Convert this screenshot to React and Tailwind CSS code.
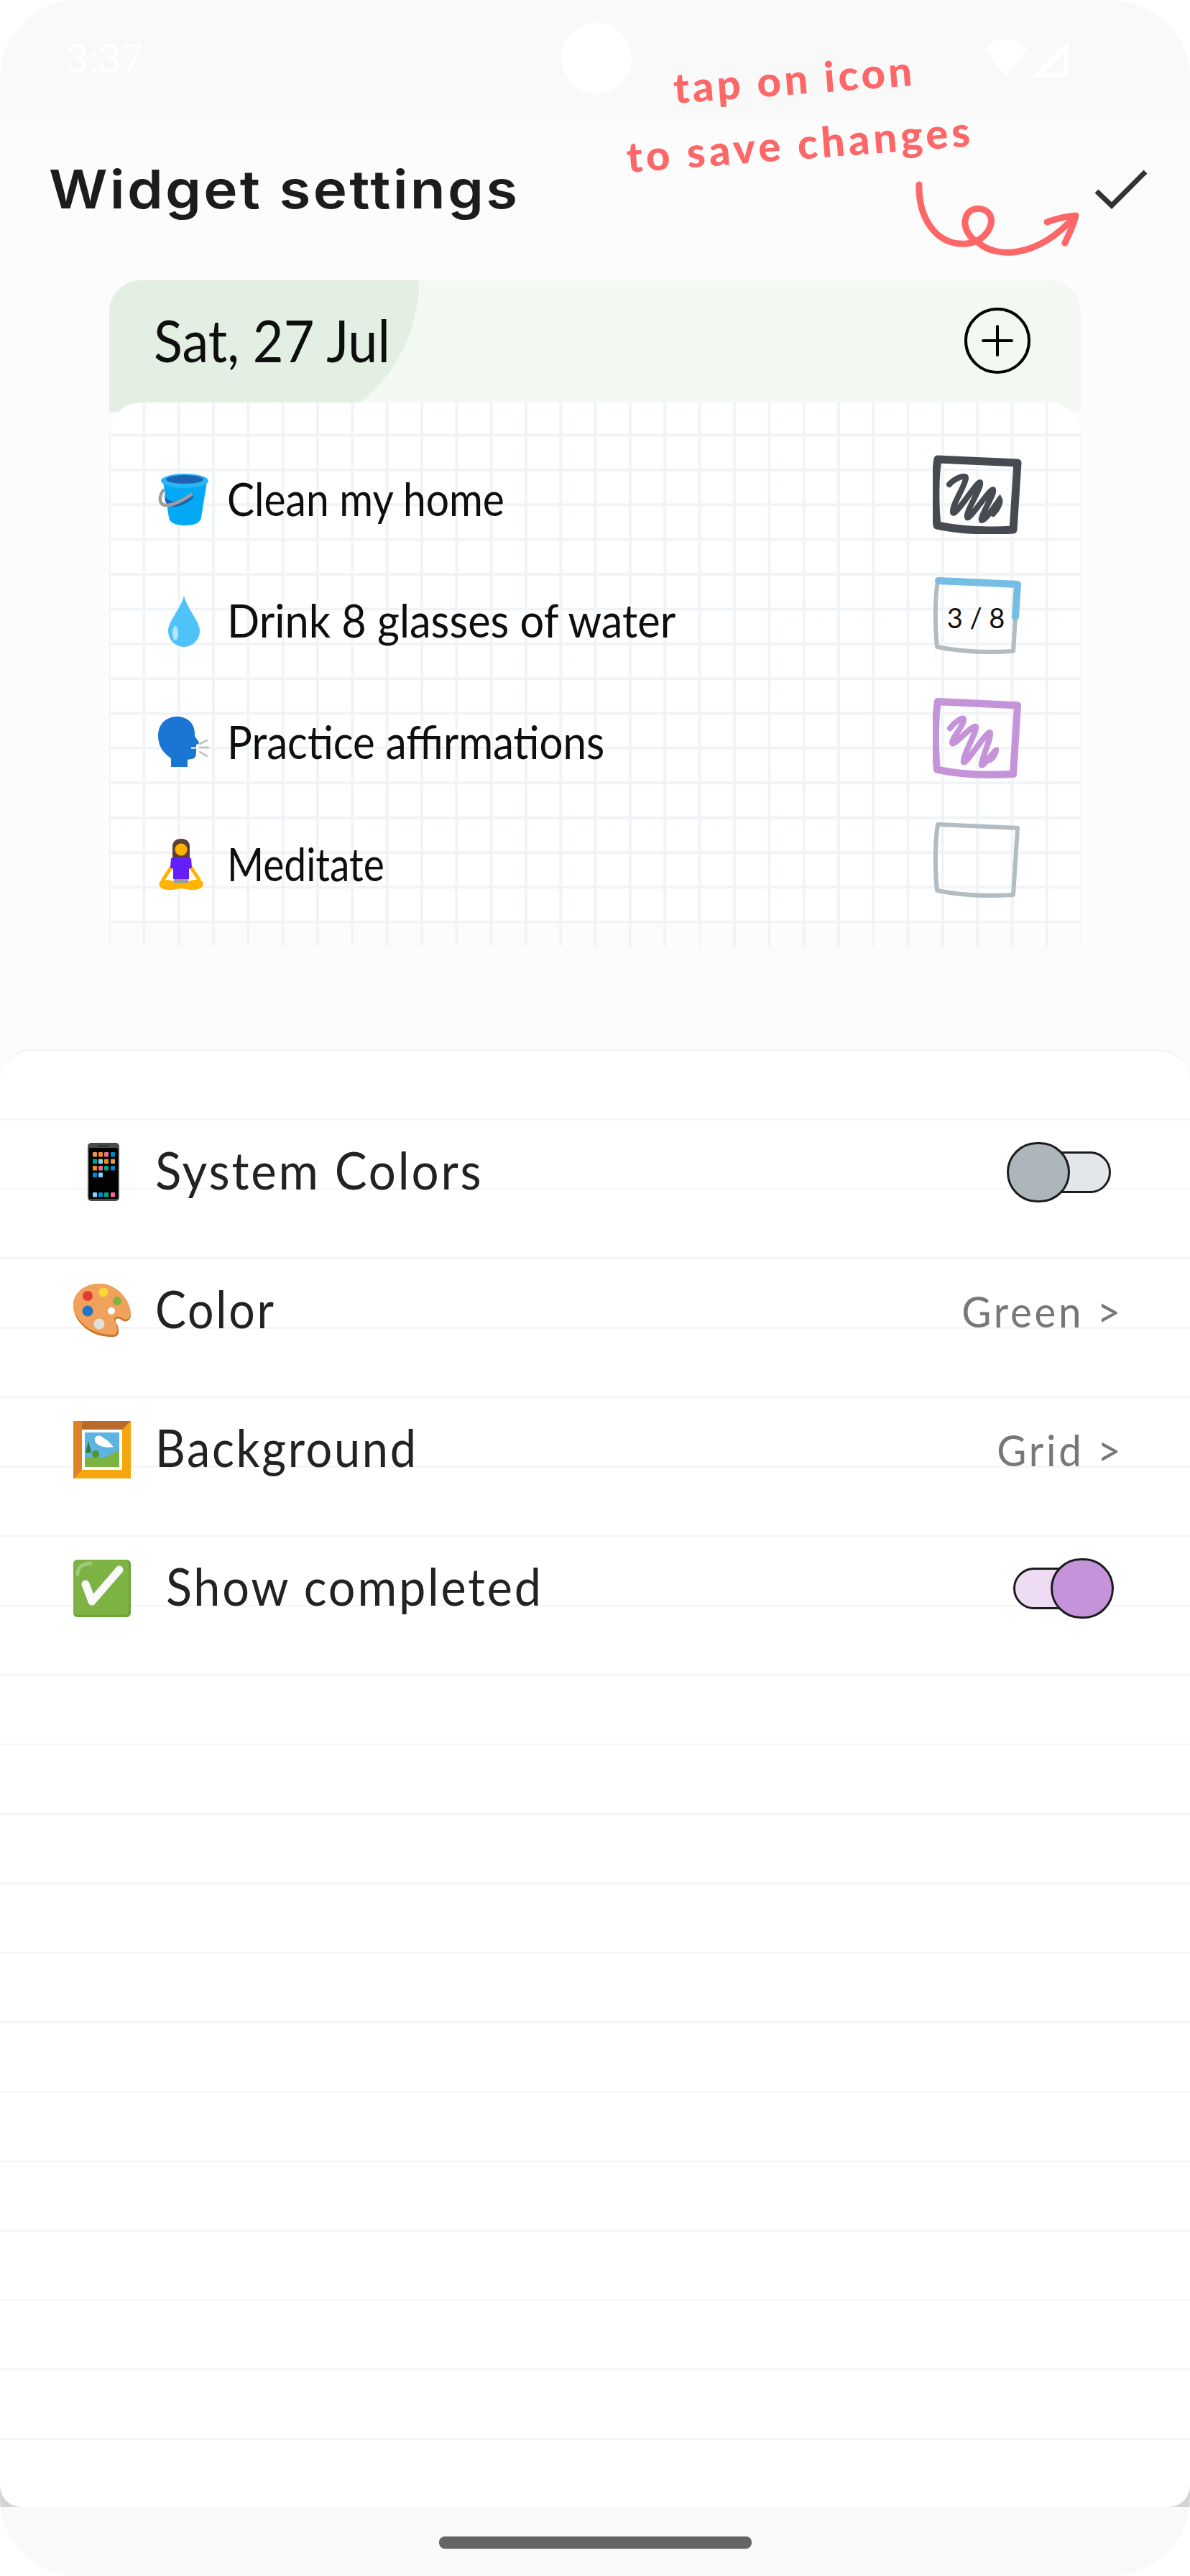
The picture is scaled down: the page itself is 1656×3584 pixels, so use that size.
function BucketEmoji() {
  return (
    <svg viewBox="0 0 72 74" className="w-[72px] h-[74px] shrink-0">
      <path d="M7 12 L15 62 Q17 73 38 73 Q58 73 60 62 L68 12Z" fill="#03a9f4" />
      <path d="M8 26 C10 44 30 44 50 30 L48 36 C30 50 16 50 10 40Z" fill="#1e64b4" />
      <path d="M7 24 C-1 38 3 46 14 45 C24 44 36 37 46 30" stroke="#9e9e9e" strokeWidth="4.5" fill="none" strokeLinecap="round" />
      <ellipse cx="37" cy="11" rx="33" ry="10" fill="#29b6f6" />
      <ellipse cx="37" cy="9" rx="26" ry="6" fill="#1e64b4" />
    </svg>
  )
}

function DropEmoji() {
  return (
    <svg viewBox="0 0 72 72" className="w-[72px] h-[72px] shrink-0">
      <path d="M36 1 C31 20 14 36 14 50 A22 22 0 0 0 58 50 C58 36 41 20 36 1Z" fill="#4fc3f7" />
      <ellipse cx="24" cy="53" rx="4" ry="10" fill="#b3e5fc" />
    </svg>
  )
}

function HeadEmoji() {
  return (
    <svg viewBox="0 0 72 72" className="w-[72px] h-[72px] shrink-0">
      <path d="M26 0 C42 0 50 10 51 22 L51 27 L57 36 Q57 38 53 39 L53 50 Q53 59 46 59 L41 60 L41 70 L18 70 L18 58 C6 50 0 40 0 26 C0 10 12 0 26 0Z" fill="#1976d2" />
      <path d="M58 38 L68 33 M58 43 L70 43 M58 49 L68 55" stroke="#b0bec5" strokeWidth="2.5" strokeLinecap="round" />
      <path d="M46 44 L56 43" stroke="#ffffff" strokeWidth="2" />
    </svg>
  )
}

function MeditateEmoji() {
  return (
    <svg viewBox="0 0 72 72" className="w-[72px] h-[72px] shrink-0">
      <path d="M20 28 L20 11 C20 3 26 0 32 0 C38 0 44 3 44 11 L44 28Z" fill="#5d4037" />
      <circle cx="32" cy="15" r="8.5" fill="#ffb300" />
      <path d="M18 40 L7 57 M46 40 L57 57" stroke="#ffb300" strokeWidth="5" strokeLinecap="round" />
      <path d="M2 60 C6 54 20 58 32 62 C44 58 58 54 62 60 C65 68 56 72 44 71 L32 69 L20 71 C8 72 -1 68 2 60Z" fill="#ffb300" />
      <rect x="22" y="54" width="20" height="8" fill="#9e9e9e" />
      <path d="M18 27 L46 27 L47 40 L43 42 L43 56 L21 56 L21 42 L17 40Z" fill="#651fff" />
    </svg>
  )
}

function PhoneEmoji() {
  const apps = [
    ["#e59a4c", "#ef8f16", "#ee6a92", "#0288d1"],
    ["#00a68a", "#81d4fa", "#ef8f16", "#e59a4c"],
    ["#ef8f16", "#ee6a92", "#00a68a", "#0288d1"],
    ["#0288d1", "#81d4fa", null, null],
  ]
  const xs = [7, 15, 23, 32]
  const ys = [13, 22.5, 32, 41.5]
  const dock = ["#81d4fa", "#0288d1", "#00a68a", "#ee6a92"]
  return (
    <svg viewBox="0 0 44 81" className="w-[44px] h-[81px] shrink-0">
      <rect x="0" y="0" width="44" height="81" rx="5" fill="#4a4a4a" />
      <rect x="2" y="7" width="40" height="71" rx="2" fill="#000000" />
      <rect x="14" y="3.5" width="15" height="1.5" fill="#222222" />
      {apps.map((row, r) =>
        row.map((c, i) => c && <rect key={`${r}-${i}`} x={xs[i]} y={ys[r]} width="6" height="6.5" rx="1" fill={c} />)
      )}
      {dock.map((c, i) => (
        <rect key={c} x={xs[i]} y="69" width="6" height="6.5" rx="1" fill={c} />
      ))}
    </svg>
  )
}

function PaletteEmoji() {
  return (
    <svg viewBox="0 0 81 75" className="w-[81px] h-[75px] shrink-0">
      <path d="M36 0 C15 0 0 14 0 30 C0 50 20 75 56 74 C66 74 64 62 60 55 C56 49 62 46 68 51 C74 55 80 50 80 44 C80 25 62 0 36 0Z" fill="#c9762b" />
      <path d="M36 0 C15 0 0 14 0 29 C0 48 22 72 56 71 C64 70 62 60 58 53 C54 46 62 43 68 48 C74 52 80 48 80 42 C80 24 62 0 36 0Z" fill="#f0a25c" />
      <circle cx="53" cy="38" r="5" fill="#ffffff" />
      <circle cx="20" cy="17" r="7" fill="#e53935" />
      <circle cx="42" cy="12" r="6.5" fill="#fdd835" />
      <circle cx="61" cy="24" r="6" fill="#7cb342" />
      <circle cx="20" cy="38" r="7.5" fill="#1e77c9" />
      <circle cx="36" cy="56" r="7.5" fill="#e0e0e0" />
    </svg>
  )
}

function FrameEmoji() {
  return (
    <svg viewBox="0 0 80 80" className="w-[80px] h-[80px] shrink-0">
      <rect width="80" height="80" fill="#f5a60c" />
      <path d="M0 0 H80 L68 12 H12 V68 L0 80Z" fill="#bb6a2e" />
      <path d="M0 0 H12 V68 L0 80Z" fill="#dd8226" />
      <rect x="12" y="12" width="56" height="56" fill="#ffffff" />
      <rect x="16" y="16" width="48" height="48" fill="#5db4e0" />
      <path d="M16 52 C30 46 40 56 50 48 C54 44 60 42 64 42 V64 H16Z" fill="#7cb342" />
      <path d="M21 28 L25 44 H17Z" fill="#2e7d32" />
      <circle cx="31" cy="46" r="5" fill="#4c9a2a" />
      <path d="M30 28 C28 20 38 18 42 24 C48 26 52 32 56 36 C46 38 34 36 30 28Z" fill="#ffffff" />
    </svg>
  )
}

function CheckEmoji() {
  return (
    <svg viewBox="0 0 80 80" className="w-[80px] h-[80px] shrink-0">
      <rect width="80" height="80" rx="6" fill="#6ea33c" />
      <rect width="77" height="77" rx="6" fill="#7cb342" />
      <path d="M17 34 L26 58 L64 14" stroke="#fafafa" strokeWidth="11" fill="none" strokeLinecap="round" strokeLinejoin="round" />
      <path d="M6 20 C6 10 12 6 24 5" stroke="#a5c97f" strokeWidth="5" fill="none" strokeLinecap="round" />
    </svg>
  )
}

function TaskBox({ color, width, scribble, h = 110, children }) {
  return (
    <div className="relative w-[124px] -mt-[14px] shrink-0" style={{ height: h }}>
      <svg viewBox="0 0 124 110" preserveAspectRatio="none" className="w-full h-full">
        <path
          d="M7 6 L118 11 L112 104 C80 106 40 105 6 98 C3 70 3 30 7 6Z"
          stroke={color}
          strokeWidth={width}
          fill="none"
          strokeLinejoin="round"
        />
        {scribble && <path d={scribble} stroke={color} strokeWidth="8" fill="none" strokeLinecap="round" />}
        {children}
      </svg>
    </div>
  )
}

function Toggle({ on }) {
  if (on) {
    return (
      <div className="relative w-[140px] h-[84px] flex items-center mr-[3px]">
        <div className="w-[100px] h-[58px] rounded-l-[29px] bg-[#eedcf3] border-[3px] border-[#1c1c1c]" />
        <div className="absolute right-0 top-0 w-[88px] h-[84px] rounded-full bg-[#c593da] border-[3px] border-[#1c1c1c]" />
      </div>
    )
  }
  return (
    <div className="relative w-[145px] h-[84px] flex items-center justify-end mr-[7px]">
      <div className="w-[110px] h-[58px] rounded-r-[29px] bg-[#e4e7ea] border-[3px] border-[#1c1c1c]" />
      <div className="absolute left-0 top-0 w-[88px] h-[84px] rounded-full bg-[#adb7bb] border-[3px] border-[#1c1c1c]" />
    </div>
  )
}

const tasks = [
  {
    icon: <BucketEmoji />,
    label: "Clean my home",
    sx: "scale-x-[0.89]",
    box: (
      <TaskBox
        color="#454b50"
        width={11}
        scribble="M23 41 C30 33 46 26 46 32 C46 42 26 70 28 80 C30 88 62 36 66 38 C70 42 44 82 48 87 C52 90 80 46 84 48 C88 52 64 88 68 91 C72 93 90 66 93 62 C95 66 90 76 84 82"
      />
    ),
  },
  {
    icon: <DropEmoji />,
    label: "Drink 8 glasses of water",
    sx: "scale-x-[0.93]",
    box: (
      <TaskBox color="#b2bcc3" width={6}>
        <path d="M8 6 L118 11 L115 56" stroke="#74bde4" strokeWidth="10" fill="none" strokeLinecap="round" strokeLinejoin="round" />
        <text x="60" y="72" textAnchor="middle" fontFamily="Lato, sans-serif" fontSize="38" fill="#111111">3 / 8</text>
      </TaskBox>
    ),
  },
  {
    icon: <HeadEmoji />,
    label: "Practice affirmations",
    sx: "scale-x-[0.91]",
    box: (
      <TaskBox
        color="#c593da"
        width={10}
        h={113}
        scribble="M24 42 C30 34 42 26 43 30 C44 38 26 56 27 62 C28 68 56 36 60 40 C62 46 40 82 43 88 C46 92 76 44 80 48 C82 54 66 88 68 92 C70 94 86 72 88 72 C88 76 84 82 80 85"
      />
    ),
  },
  { icon: <MeditateEmoji />, label: "Meditate", sx: "scale-x-[0.86]", box: <TaskBox color="#b2bcc3" width={6} /> },
]

function Value({ children }) {
  return <span className="-mr-[10px] text-[60px] leading-[76px] tracking-[4px] text-[#777777] whitespace-nowrap origin-right scale-x-[0.94]">{children}</span>
}

function Row({ icon, label, sx, gap = "ml-[33px]", right }) {
  return (
    <div className="h-[193.26px] flex items-center">
      {icon}
      <span className={`${gap} ${sx} flex-1 pb-[8px] text-[72px] leading-[84px] tracking-[3px] text-[#222222] origin-left whitespace-nowrap`}>{label}</span>
      {right}
    </div>
  )
}

export default function App() {
  return (
    <div className="relative w-[1656px] h-[3584px] flex flex-col overflow-hidden rounded-[110px] bg-[#fcfcfd] font-['Lato',sans-serif]">
      {/* Status bar */}
      <div className="relative h-[165px] shrink-0 bg-[#f9f9f9] flex justify-between px-[92px] pt-[52px]">
        <span className="font-['Roboto',sans-serif] text-[56px] leading-[60px] text-white">3:37</span>
        <div className="absolute left-[781px] top-[32px] w-[98px] h-[98px] rounded-full bg-white" />
        <svg viewBox="0 0 120 54" className="absolute left-[1368px] top-[54px] w-[120px] h-[54px]">
          <path d="M16 2 H48 L62 14 L32 54 L2 14Z" fill="#ffffff" />
          <path d="M119 2 V53 H68Z M113 20 L84 47 H113Z" fill="#ffffff" fillRule="evenodd" />
        </svg>
      </div>

      {/* Title */}
      <div className="relative h-[225px] shrink-0 pl-[68px] pt-[55px]">
        <h1 className="font-['Inter',sans-serif] font-semibold text-[74px] leading-[86px] tracking-[3px] text-[#1c1c1c] origin-left scale-x-[1.08]">Widget settings</h1>
      </div>

      {/* Preview card */}
      <div className="w-[1352px] ml-[152px] shrink-0 h-[926px]">
        <div className="relative h-[183px] rounded-t-[44px] bg-[#f3f8f2] overflow-hidden">
          <div className="absolute left-0 top-0 w-[431px] h-[210px] rounded-br-[200px_210px] bg-[#e3efe2]" />
          <div className="relative flex items-start justify-between pl-[62px] pr-[70px] pt-[32px]">
            <span className="text-[82px] leading-[100px] text-[#0e0e0e] origin-left scale-x-[0.9] whitespace-nowrap">Sat, 27 Jul</span>
            <svg viewBox="0 0 92 92" className="w-[92px] h-[92px] mt-[6px]">
              <circle cx="46" cy="46" r="44" stroke="#000000" strokeWidth="4" fill="none" />
              <path d="M46 26 V66 M26 46 H66" stroke="#000000" strokeWidth="4" strokeLinecap="round" />
            </svg>
          </div>
        </div>
        <div className="relative -mt-[13px] h-[726px] rounded-t-[44px] pt-[50px] bg-white bg-[linear-gradient(to_right,transparent_44.3px,#f1f4f6_44.3px,#f1f4f6_48.33px),linear-gradient(to_bottom,transparent_44.4px,#f1f4f6_44.4px,#f1f4f6_48.4px)] bg-[size:48.33px_48.4px] bg-[position:2px_-1px]">
          {tasks.map((t) => (
            <div key={t.label} className="h-[169.3px] flex items-center pl-[68px] pr-[82px]">
              {t.icon}
              <span className={`${t.sx} ml-[24px] pb-[2px] text-[64px] leading-[76px] text-[#0e0e0e] origin-left whitespace-nowrap flex-1`}>{t.label}</span>
              {t.box}
            </div>
          ))}
        </div>
        <div className="h-[30px] w-full bg-[linear-gradient(to_right,transparent_44.3px,#f1f4f6_44.3px,#f1f4f6_48.33px)] bg-[size:48.33px_100%] bg-[position:2px_0]" />
      </div>

      {/* Settings sheet */}
      <div className="relative z-10 mt-[144px] h-[2028px] shrink-0 rounded-t-[44px] rounded-b-[30px] bg-white border-t-2 border-[#f1f1f1] bg-[repeating-linear-gradient(to_bottom,transparent_0,transparent_94.1px,#f5f5f5_94.1px,#f5f5f5_96.63px)] pt-[72px] pl-[102px] pr-[103px]">
        <Row icon={<div className="pl-[20px] pr-[17px]"><PhoneEmoji /></div>} label="System Colors" sx="scale-x-[0.935]" right={<Toggle />} />
        <Row icon={<PaletteEmoji />} label="Color" sx="scale-x-[0.895]" right={<Value>Green &gt;</Value>} />
        <Row icon={<FrameEmoji />} label="Background" sx="scale-x-[0.9]" gap="ml-[34px]" right={<Value>Grid &gt;</Value>} />
        <Row icon={<CheckEmoji />} label="Show completed" sx="scale-x-[0.925]" gap="ml-[49px]" right={<Toggle on />} />
      </div>

      {/* Nav bar */}
      <div className="relative flex-1 -mt-[30px] pt-[71px] flex justify-center bg-[linear-gradient(to_bottom,#d4d4d4_30px,#f9f9f9_30px)]">
        <div className="w-[435px] h-[17px] rounded-[8px] bg-[#646464]" />
      </div>

      {/* Annotation */}
      <div className="absolute left-[937px] top-[100px] -rotate-[4.3deg] origin-left font-black text-[58px] leading-[44px] tracking-[4.5px] text-[#fd6767] whitespace-nowrap">tap on icon</div>
      <div className="absolute left-[872px] top-[196px] -rotate-[4.4deg] origin-left font-black text-[58px] leading-[44px] tracking-[5px] text-[#fd6767] whitespace-nowrap">to save changes</div>
      <svg viewBox="1260 240 260 130" className="absolute left-[1260px] top-[240px] w-[260px] h-[130px]">
        <path
          d="M1279 257 C1278 300 1300 342 1345 339 C1372 336 1384 312 1378 300 C1372 288 1352 286 1345 300 C1338 316 1350 332 1362 338 C1385 358 1440 362 1495 302 M1457 309 C1470 304 1484 301 1497 300 C1494 314 1487 326 1482 338"
          stroke="#fd6767"
          strokeWidth="9"
          fill="none"
          strokeLinecap="round"
          strokeLinejoin="round"
        />
      </svg>
      <svg viewBox="0 0 76 56" className="absolute left-[1522px] top-[236px] w-[76px] h-[56px]">
        <path d="M4 30 L25 50 L72 3" stroke="#333333" strokeWidth="7" fill="none" />
      </svg>
    </div>
  )
}
